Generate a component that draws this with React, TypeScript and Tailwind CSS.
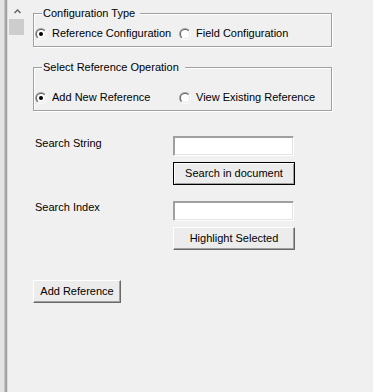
import React from "react";

function Radio({ checked, id }: { checked?: boolean; id: string }) {
  return (
    <svg width="12" height="12" viewBox="0 0 12 12" className="shrink-0">
      <defs>
        <linearGradient id={`o${id}`} x1="0" y1="0" x2="1" y2="1">
          <stop offset="0.5" stopColor="#a0a0a0" />
          <stop offset="0.5" stopColor="#ffffff" />
        </linearGradient>
        <linearGradient id={`i${id}`} x1="0" y1="0" x2="1" y2="1">
          <stop offset="0.5" stopColor="#696969" />
          <stop offset="0.5" stopColor="#e3e3e3" />
        </linearGradient>
      </defs>
      <circle cx="6" cy="6" r="6" fill={`url(#o${id})`} />
      <circle cx="6" cy="6" r="5" fill={`url(#i${id})`} />
      <circle cx="6" cy="6" r="4" fill="#ffffff" />
      {checked && <circle cx="6" cy="6" r="2" fill="#000000" />}
    </svg>
  );
}

function RadioItem({ label, checked, id, wide }: { label: string; checked?: boolean; id: string; wide?: boolean }) {
  return (
    <div className={`flex items-center gap-[5px] h-[13px] ${wide ? "w-[144px]" : ""}`}>
      <Radio checked={checked} id={id} />
      <span className="whitespace-nowrap">{label}</span>
    </div>
  );
}

function TextBox() {
  return (
    <div className="w-[121px] h-[20px] bg-white border border-t-[#a0a0a0] border-l-[#a0a0a0] border-r-white border-b-white shadow-[inset_1px_1px_0_#a0a0a0,inset_-1px_-1px_0_#e3e3e3]" />
  );
}

export default function App() {
  return (
    <div className="w-[373px] h-[392px] bg-[#f0f0f0] flex font-['Liberation_Sans',Arial,sans-serif] text-[11px] leading-[13px] text-black overflow-hidden">
      {/* left splitter edge */}
      <div className="flex h-full shrink-0">
        <div className="w-[4px] bg-[#e3e3e3]" />
        <div className="w-[1px] bg-[#c4c4c4]" />
        <div className="w-[1px] bg-[#a8a8a8]" />
        <div className="w-[1px] bg-[#a0a0a0]" />
        <div className="w-[1px] bg-[#dcdcdc]" />
      </div>
      {/* scrollbar */}
      <div className="w-[17px] shrink-0 flex flex-col items-center pt-[9px]">
        <svg width="7" height="5" viewBox="0 0 7 5" className="ml-[1px]">
          <polyline points="0.5,4 3.5,1 6.5,4" fill="none" stroke="#606060" strokeWidth="1.4" />
        </svg>
        <div className="mt-[5px] w-[15px] h-[16px] bg-[#cdcdcd]" />
      </div>
      {/* content */}
      <div className="flex flex-col pl-[8px]">
        {/* group 1 */}
        <div className="relative mt-[7px] pt-[6px]">
          <span className="absolute left-[9px] top-0 pl-[1px] pr-[5px] bg-[#f0f0f0] whitespace-nowrap">Configuration Type</span>
          <div className="w-[299px] h-[34px] border border-[#a0a0a0] shadow-[inset_1px_1px_0_#fff,1px_1px_0_#fff] pt-[13px] pl-[1px] flex">
            <RadioItem label="Reference Configuration" checked id="a" wide />
            <RadioItem label="Field Configuration" id="b" />
          </div>
        </div>
        {/* group 2 */}
        <div className="relative mt-[14px] pt-[6px]">
          <span className="absolute left-[9px] top-0 pl-[1px] pr-[6px] bg-[#f0f0f0] whitespace-nowrap">Select Reference Operation</span>
          <div className="w-[299px] h-[44px] border border-[#a0a0a0] shadow-[inset_1px_1px_0_#fff,1px_1px_0_#fff] pt-[23px] pl-[1px] flex">
            <RadioItem label="Add New Reference" checked id="c" wide />
            <RadioItem label="View Existing Reference" id="d" />
          </div>
        </div>
        {/* search string */}
        <div className="flex mt-[25px]">
          <div className="w-[140px] pl-[2px] pt-[1px]">Search String</div>
          <div className="flex flex-col">
            <TextBox />
            <button className="mt-[6px] w-[122px] h-[23px] bg-[#ececec] border border-black shadow-[inset_1px_1px_0_#fff,inset_-1px_-1px_0_#a0a0a0] flex items-center justify-center">
              Search in document
            </button>
          </div>
        </div>
        {/* search index */}
        <div className="flex mt-[16px]">
          <div className="w-[140px] pl-[2px]">Search Index</div>
          <div className="flex flex-col">
            <TextBox />
            <button className="mt-[6px] w-[122px] h-[23px] bg-[#ececec] border border-t-white border-l-white border-r-[#696969] border-b-[#696969] shadow-[inset_-1px_-1px_0_#a0a0a0] flex items-center justify-center">
              Highlight Selected
            </button>
          </div>
        </div>
        <button className="mt-[30px] w-[88px] h-[23px] bg-[#ececec] border border-t-white border-l-white border-r-[#696969] border-b-[#696969] shadow-[inset_-1px_-1px_0_#a0a0a0] flex items-center justify-center">
          Add Reference
        </button>
      </div>
    </div>
  );
}
